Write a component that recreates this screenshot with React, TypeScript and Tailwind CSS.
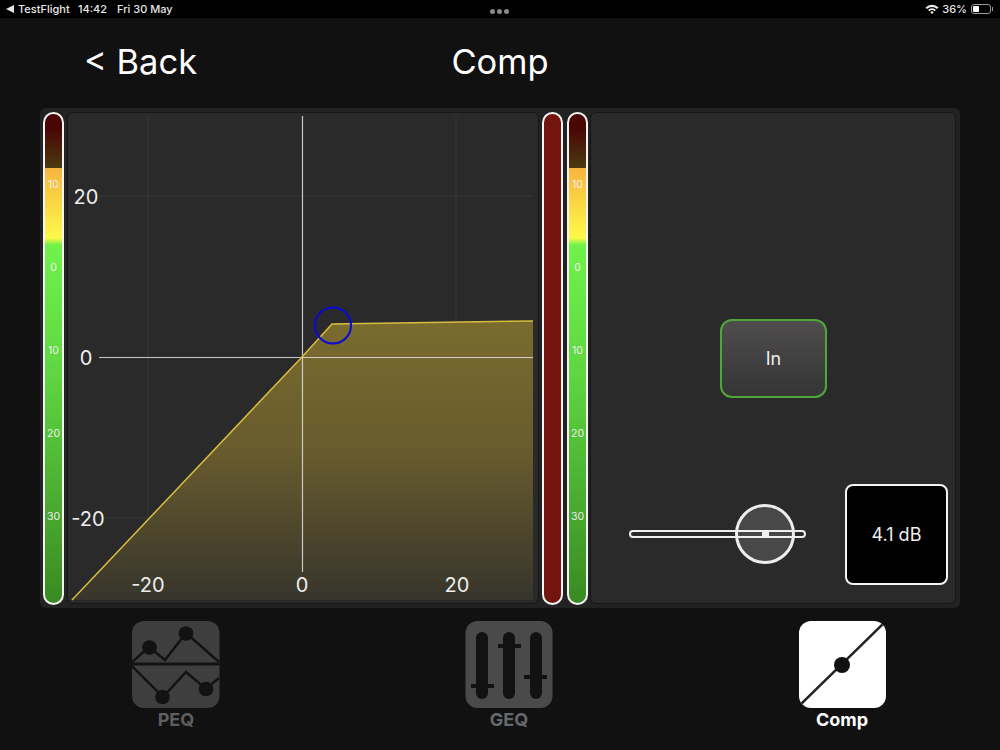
import React from "react";

function Meter() {
  return (
    <div className="w-[21px] h-[493px] shrink-0 rounded-full border-2 border-[#f4f4f4] overflow-hidden bg-[linear-gradient(to_bottom,#4a0404_0px,#4a0505_14px,#4a3a10_54px,#f7b53f_54px,#fdf94a_124px,#70f24a_131px,#5fd642_260px,#3a8a22_489px)] flex flex-col items-center pt-[30px] text-[10.5px] leading-none text-[#eeeeee]">
      {["10", "0", "10", "20", "30"].map((t, i) => (
        <div key={i} className="h-[83px] shrink-0 flex items-center">{t}</div>
      ))}
    </div>
  );
}

function Graph() {
  return (
    <div className="relative w-[472px] h-[492px] ml-[3px] shrink-0 rounded-[6px] bg-[#2a2a2a] border border-[#171717] overflow-hidden">
      <svg className="absolute left-[-1px] top-[-1px]" width="472" height="492" viewBox="67 112 472 492">
        <defs>
          <linearGradient id="fillg" x1="0" y1="0" x2="0" y2="1">
            <stop offset="0" stopColor="#7a6b2e" />
            <stop offset="0.45" stopColor="#695c2e" />
            <stop offset="1" stopColor="#37352c" />
          </linearGradient>
        </defs>
        <g stroke="#303a38" strokeWidth="1">
          <line x1="148" y1="116" x2="148" y2="572" />
          <line x1="456" y1="116" x2="456" y2="572" />
          <line x1="99" y1="196" x2="533" y2="196" />
          <line x1="105" y1="518" x2="533" y2="518" />
        </g>
        <path d="M72 600 L302 357 L332 324 L533 321 L533 600 Z" fill="url(#fillg)" />
        <line x1="302.5" y1="116" x2="302.5" y2="572" stroke="#d8d8d8" strokeOpacity="0.9" strokeWidth="1.2" />
        <line x1="99" y1="357.5" x2="533" y2="357.5" stroke="#e0e0e0" strokeOpacity="0.85" strokeWidth="1.2" />
        <path d="M72 600 L302 357 L332 324 L533 321" fill="none" stroke="#d9bd3f" strokeWidth="1.5" />
        <circle cx="333" cy="325.5" r="18" fill="none" stroke="#0808d8" strokeWidth="2" />
      </svg>
      <div className="absolute left-[0px] top-[72px] w-[36px] text-center text-[20px] leading-[24px] text-[#eeeeee]">20</div>
      <div className="absolute left-[0px] top-[233px] w-[36px] text-center text-[20px] leading-[24px] text-[#eeeeee]">0</div>
      <div className="absolute left-[0px] top-[394px] w-[40px] text-center text-[20px] leading-[24px] text-[#eeeeee]">-20</div>
      <div className="absolute left-[60px] top-[460px] w-[40px] text-center text-[20px] leading-[24px] text-[#eeeeee]">-20</div>
      <div className="absolute left-[214px] top-[460px] w-[40px] text-center text-[20px] leading-[24px] text-[#eeeeee]">0</div>
      <div className="absolute left-[369px] top-[460px] w-[40px] text-center text-[20px] leading-[24px] text-[#eeeeee]">20</div>
    </div>
  );
}

function PeqIcon() {
  return (
    <svg width="88" height="88" viewBox="132 621 88 88">
      <rect x="132" y="621" width="87.5" height="87" rx="12" fill="#3e3e3e" />
      <g fill="none" stroke="#121212" strokeWidth="2.4">
        <path d="M132 662 L149 647 L165 660 L186 633 L219 662" />
        <path d="M132 666 L163 697 L186 672 L206 689 L219 678" />
      </g>
      <line x1="132" y1="664" x2="219.5" y2="664" stroke="#121212" strokeWidth="2.8" />
      <g fill="#121212">
        <circle cx="149.5" cy="647.5" r="7.3" />
        <circle cx="186" cy="633.5" r="7.3" />
        <circle cx="162.5" cy="697" r="7.3" />
        <circle cx="206" cy="689" r="7.3" />
      </g>
    </svg>
  );
}

function GeqIcon() {
  return (
    <svg width="88" height="88" viewBox="465 621 88 88">
      <rect x="465.5" y="621" width="87" height="87" rx="12" fill="#4a4a4a" />
      <g fill="#121212">
        <rect x="476" y="632" width="12" height="67" rx="6" />
        <rect x="503" y="632" width="12" height="67" rx="6" />
        <rect x="530" y="632" width="12" height="67" rx="6" />
        <rect x="471" y="684" width="23" height="4" />
        <rect x="498" y="644" width="23" height="4" />
        <rect x="524" y="675" width="23" height="4" />
      </g>
    </svg>
  );
}

function CompIcon() {
  return (
    <svg width="88" height="88" viewBox="798 621 88 88">
      <clipPath id="cc"><rect x="799" y="621" width="87" height="87" rx="12" /></clipPath>
      <rect x="799" y="621" width="87" height="87" rx="12" fill="#ffffff" />
      <line x1="797" y1="708" x2="886" y2="621" stroke="#222222" strokeWidth="2.5" clipPath="url(#cc)" />
      <circle cx="842" cy="665" r="8" fill="#111111" />
    </svg>
  );
}

function Tab({ label, icon, cls }: { label: string; icon: React.ReactNode; cls: string }) {
  return (
    <div className="w-[88px] flex flex-col items-center">
      {icon}
      <div className={"mt-[-1px] text-[18px] leading-[24px] font-bold whitespace-nowrap " + cls}>{label}</div>
    </div>
  );
}

export default function App() {
  return (
    <div className="w-[1000px] h-[750px] bg-[#111111] text-white flex flex-col overflow-hidden font-['Inter','Liberation_Sans',sans-serif]">
      <div className="relative h-[18px] bg-black flex items-center pl-[6px] pr-[7px] text-[11px] leading-none font-medium text-[#e6e6e6] shrink-0">
        <svg width="9" height="8" viewBox="0 0 9 8" className="mr-[3px]"><path d="M0 4 L8 0 L8 8 Z" fill="#e6e6e6" /></svg>
        <span className="w-[60px]">TestFlight</span>
        <span className="w-[39px]">14:42</span>
        <span>Fri 30 May</span>
        <div className="absolute left-[490px] top-[9px] flex gap-[2px]">
          <div className="w-[5px] h-[5px] rounded-full bg-[#8a8a8a]" />
          <div className="w-[5px] h-[5px] rounded-full bg-[#8a8a8a]" />
          <div className="w-[5px] h-[5px] rounded-full bg-[#8a8a8a]" />
        </div>
        <div className="ml-auto flex items-center">
          <svg width="14" height="10" viewBox="0 0 14 10" className="mr-[3px]">
            <path d="M0.5 3.5 A9 9 0 0 1 13.5 3.5 L12 5 A7 7 0 0 0 2 5 Z" fill="#eeeeee" />
            <path d="M3 6 A5.5 5.5 0 0 1 11 6 L9.6 7.3 A3.6 3.6 0 0 0 4.4 7.3 Z" fill="#eeeeee" />
            <path d="M5.3 8.2 A2.3 2.3 0 0 1 8.7 8.2 L7 10 Z" fill="#eeeeee" />
          </svg>
          <span className="mr-[4px]">36%</span>
          <div className="w-[20px] h-[10px] rounded-[3px] border border-[#9a9a9a] p-[1px]">
            <div className="w-[6px] h-full rounded-[1px] bg-white" />
          </div>
          <div className="w-[1px] h-[4px] bg-[#9a9a9a] ml-[1px]" />
        </div>
      </div>

      <div className="relative h-[90px] shrink-0 flex items-center justify-center text-[34.5px] leading-none">
        <span className="absolute left-[84px] top-[26px] leading-[36px]">{"< Back"}</span>
        <span className="mt-[-2px]">Comp</span>
      </div>

      <div className="mx-[40px] w-[920px] h-[500px] shrink-0 rounded-[6px] bg-[#222222] flex items-start pt-[4px] pl-[3px]">
        <Meter />
        <Graph />
        <div className="ml-[3px]"><div className="w-[21px] h-[493px] rounded-full border-2 border-[#f4f4f4] bg-[#74140e]" /></div>
        <div className="ml-[4px]"><Meter /></div>
        <div className="ml-[2px] w-[366px] h-[492px] rounded-[6px] bg-[#2a2a2a] border border-[#171717] flex flex-col">
          <div className="mt-[206px] ml-[129px] w-[107px] h-[79px] rounded-[12px] border-2 border-[#4fa63a] bg-[linear-gradient(to_bottom,#4e4c4c,#363535)] flex items-center justify-center text-[18px] text-[#eeeeee]">In</div>
          <div className="mt-[86px] flex items-center pl-[38px]">
            <div className="relative w-[177px] h-[8px] rounded-full border-2 border-[#eeeeee] mt-[-2px]">
              <div className="absolute left-[104px] top-[-28px] w-[60px] h-[60px] rounded-full border-[3px] border-[#eeeeee] bg-[#ffffff24] flex items-center justify-center">
                <div className="w-[7px] h-[5px] bg-[#eeeeee]" />
              </div>
            </div>
            <div className="ml-[39px] w-[103px] h-[101px] rounded-[8px] border-2 border-[#f4f4f4] bg-black flex items-center justify-center text-[18px] text-[#eeeeee]">4.1 dB</div>
          </div>
        </div>
      </div>

      <div className="mt-[13px] ml-[132px] flex gap-[245px]">
        <Tab label="PEQ" icon={<PeqIcon />} cls="text-[#5c5e5f]" />
        <Tab label="GEQ" icon={<GeqIcon />} cls="text-[#66696c]" />
        <Tab label="Comp" icon={<CompIcon />} cls="text-white" />
      </div>
    </div>
  );
}
